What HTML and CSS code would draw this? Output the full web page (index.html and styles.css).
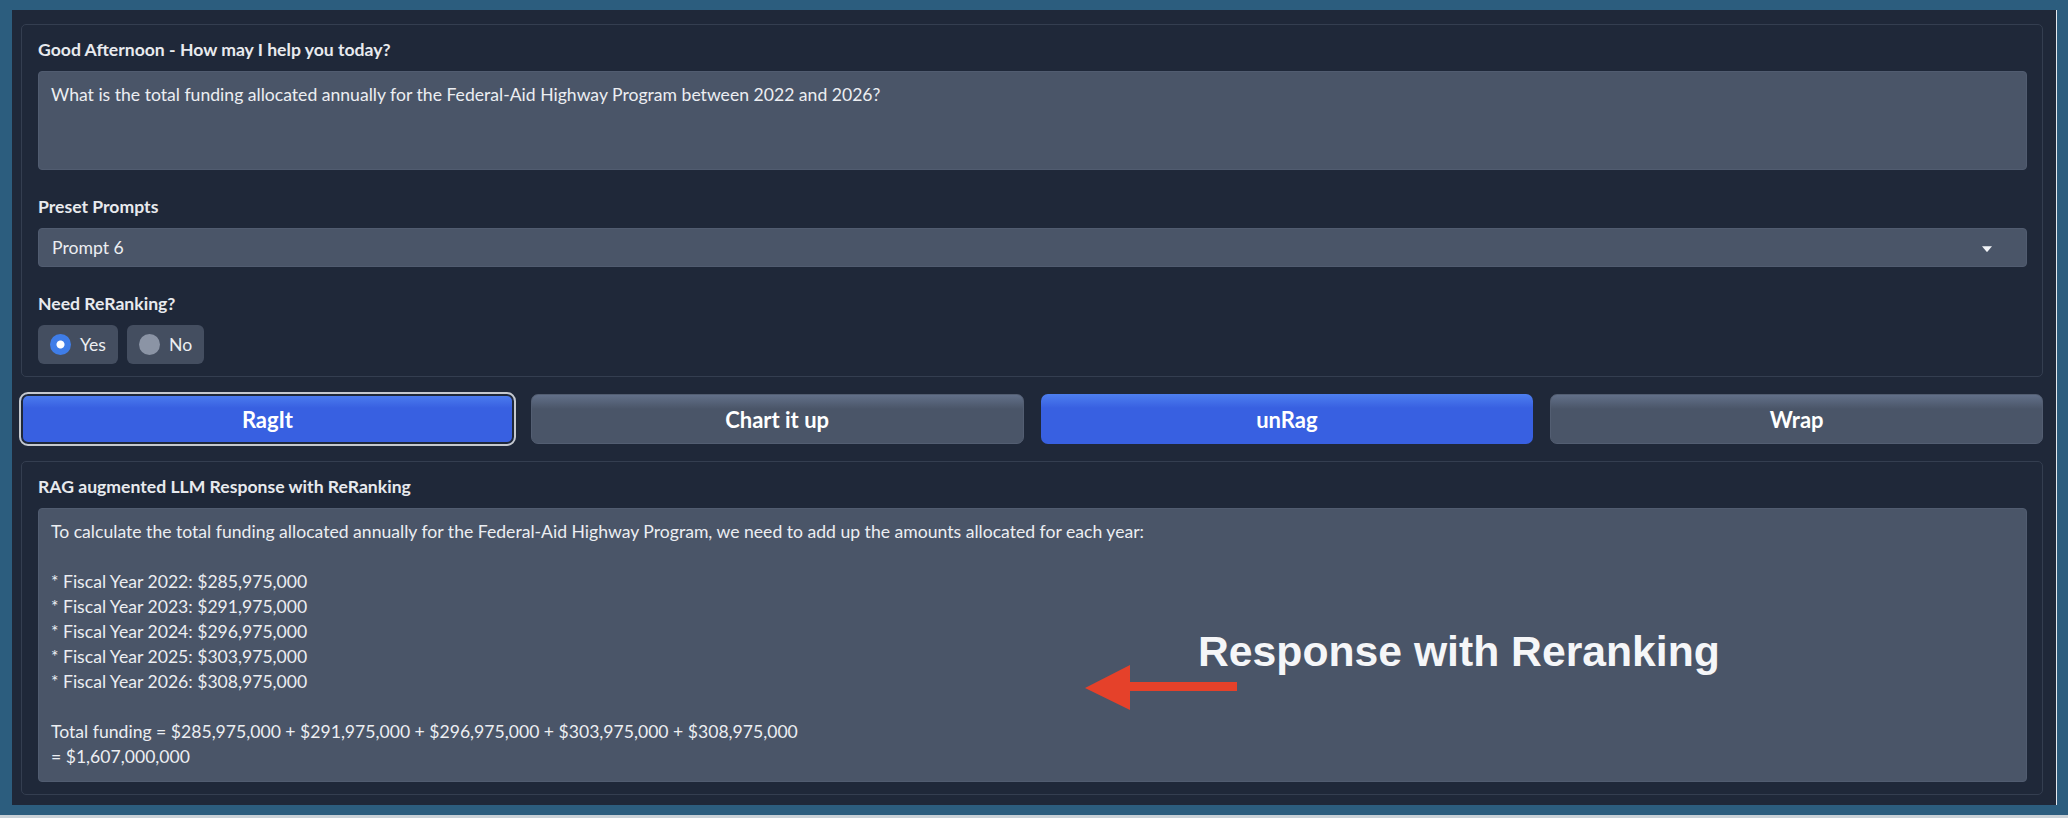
FILE: index.html
```html
<!DOCTYPE html>
<html lang="en">
<head>
<meta charset="utf-8">
<title>RAG Demo</title>
<link rel="stylesheet" href="styles.css">
</head>
<body>
<div class="panel">
  <section class="group">
    <div class="field">
      <div class="label">Good Afternoon - How may I help you today?</div>
      <div class="textbox query">What is the total funding allocated annually for the Federal-Aid Highway Program between 2022 and 2026?</div>
    </div>
    <div class="field">
      <div class="label">Preset Prompts</div>
      <div class="select">
        <span>Prompt 6</span>
        <svg class="caret" width="12" height="8" viewBox="0 0 12 8"><path d="M1 1.2 H11 L6.6 6.6 Q6 7.3 5.4 6.6 Z" fill="#f2f4f7"/></svg>
      </div>
    </div>
    <div class="field">
      <div class="label">Need ReRanking?</div>
      <div class="radios">
        <div class="radio"><span class="dot on"></span>Yes</div>
        <div class="radio"><span class="dot"></span>No</div>
      </div>
    </div>
  </section>

  <div class="actions">
    <button class="btn primary focused">RagIt</button>
    <button class="btn secondary">Chart it up</button>
    <button class="btn primary">unRag</button>
    <button class="btn secondary">Wrap</button>
  </div>

  <section class="group">
    <div class="field">
      <div class="label">RAG augmented LLM Response with ReRanking</div>
      <div class="textbox output">To calculate the total funding allocated annually for the Federal-Aid Highway Program, we need to add up the amounts allocated for each year:

* Fiscal Year 2022: $285,975,000
* Fiscal Year 2023: $291,975,000
* Fiscal Year 2024: $296,975,000
* Fiscal Year 2025: $303,975,000
* Fiscal Year 2026: $308,975,000

Total funding = $285,975,000 + $291,975,000 + $296,975,000 + $303,975,000 + $308,975,000
= $1,607,000,000<svg class="callout-arrow" width="152" height="45" viewBox="0 0 152 45"><polygon points="0,23 45,0 45,17 152,17 152,26 45,26 45,45" fill="#e5412a"/></svg><span class="callout-text">Response with Reranking</span></div>
    </div>
  </section>
</div>
</body>
</html>
```

FILE: styles.css
```css
* {
  box-sizing: border-box;
}

html {
  background: #c9d1d7;
}

body {
  margin: 0;
  height: 815px;
  padding: 10px 11px 0 12px;
  background: #2c5d7e;
  font-family: Lato, "Noto Sans", sans-serif;
  color: #e6e8ec;
}

.panel {
  height: 795px;
  background: #1f2839;
  border-right: 1px solid #e4e9ee;
  padding: 14px 13px 10px 9px;
  display: flex;
  flex-direction: column;
  gap: 17px;
}

.group {
  border: 1px solid #343e50;
  border-radius: 5px;
  padding: 13px 15px 12px 16px;
  display: flex;
  flex-direction: column;
  gap: 25px;
}

.field {
  display: flex;
  flex-direction: column;
  gap: 9px;
}

.label {
  font-size: 17.6px;
  font-weight: 700;
  line-height: 24px;
  color: #e8eaee;
}

.textbox {
  background: #4a5568;
  border: 1px solid #515c70;
  border-radius: 4px;
  font-size: 17.6px;
  line-height: 25px;
  color: #eceef2;
}

.query {
  height: 99px;
  padding: 10px 12px;
}

.output {
  position: relative;
  height: 274px;
  padding: 10px 12px 12px;
  white-space: pre-line;
}

.select {
  height: 39px;
  background: #4a5568;
  border: 1px solid #515c70;
  border-radius: 4px;
  display: flex;
  align-items: center;
  justify-content: space-between;
  padding: 0 33px 0 13px;
  font-size: 17.6px;
  line-height: 24px;
  color: #eceef2;
}

.caret {
  display: block;
  margin-top: 2px;
}

.radios {
  display: flex;
  gap: 9px;
}

.radio {
  height: 39px;
  display: flex;
  align-items: center;
  gap: 9px;
  padding: 0 12px;
  background: #444e60;
  border-radius: 6px;
  font-size: 17.6px;
  line-height: 24px;
  color: #eceef2;
}

.dot {
  width: 21px;
  height: 21px;
  border-radius: 50%;
  background: #8b94a5;
}

.dot.on {
  background: radial-gradient(circle, #ffffff 0 3.5px, #3f7de8 4.5px);
}

.actions {
  display: grid;
  grid-template-columns: repeat(4, 1fr);
  gap: 17px;
  height: 51px;
}

.btn {
  border: none;
  border-radius: 7px;
  font-family: Lato, "Noto Sans", sans-serif;
  font-size: 22px;
  font-weight: 700;
  color: #ffffff;
  cursor: pointer;
}

.primary {
  background: linear-gradient(#4d7ff0 0, #3860e1 14px);
}

.secondary {
  background: linear-gradient(#627089 0, #4a5568 14px);
  border: 1px solid #535e72;
}

.focused {
  outline: 2px solid #c5c9cf;
  outline-offset: 0;
  box-shadow: inset 0 0 0 2px #1f2839;
}

.callout-arrow {
  position: absolute;
  left: 1046px;
  top: 156px;
}

.callout-text {
  position: absolute;
  left: 1159px;
  top: 121px;
  font-family: "Liberation Sans", Arial, sans-serif;
  font-size: 42.7px;
  font-weight: 700;
  line-height: 42px;
  color: #f5f6f8;
  white-space: nowrap;
}
```
